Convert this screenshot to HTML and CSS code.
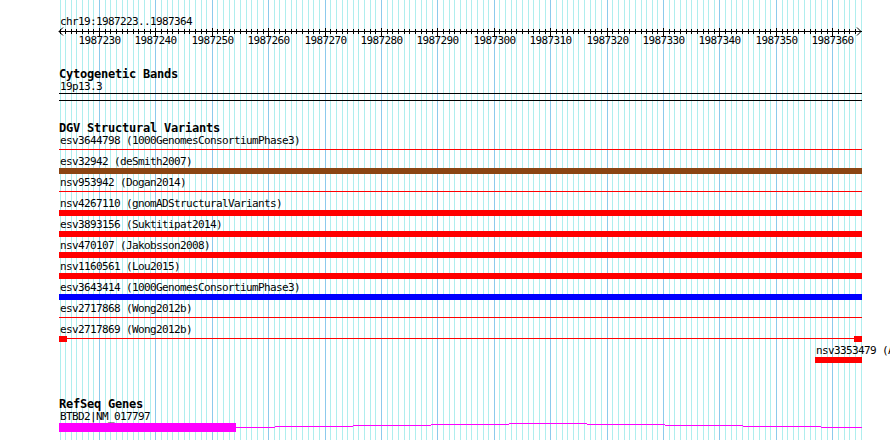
FILE: index.html
```html
<!DOCTYPE html>
<html lang="en">
<head>
    <meta charset="UTF-8">
    <title>chr19:1987223..1987364</title>
    <link rel="stylesheet" href="styles.css">
</head>
<body>

    <div class="view">
        <!-- grid lines, one per bp -->
        <svg class="grid" id="grid" width="890" height="440"></svg>

        <div class="tracks">
            <section class="ruler">
                <div class="seg-name">chr19:1987223..1987364</div>
                <svg class="axis" id="axis" width="803" height="20"></svg>
            </section>

            <section class="track cyto">
                <h2 class="track-title">Cytogenetic Bands</h2>
                <div class="feat-label">19p13.3</div>
                <div class="band"></div>
            </section>

            <section class="track dgv">
                <h2 class="track-title">DGV Structural Variants</h2>
                <div class="feature">
                    <div class="feat-label">esv3644798 (1000GenomesConsortiumPhase3)</div>
                    <div class="glyph line red"></div>
                </div>
                <div class="feature">
                    <div class="feat-label">esv32942 (deSmith2007)</div>
                    <div class="glyph bar brown"></div>
                </div>
                <div class="feature">
                    <div class="feat-label">nsv953942 (Dogan2014)</div>
                    <div class="glyph line red"></div>
                </div>
                <div class="feature">
                    <div class="feat-label">nsv4267110 (gnomADStructuralVariants)</div>
                    <div class="glyph bar red"></div>
                </div>
                <div class="feature">
                    <div class="feat-label">esv3893156 (Suktitipat2014)</div>
                    <div class="glyph bar red"></div>
                </div>
                <div class="feature">
                    <div class="feat-label">nsv470107 (Jakobsson2008)</div>
                    <div class="glyph bar red"></div>
                </div>
                <div class="feature">
                    <div class="feat-label">nsv1160561 (Lou2015)</div>
                    <div class="glyph bar red"></div>
                </div>
                <div class="feature">
                    <div class="feat-label">esv3643414 (1000GenomesConsortiumPhase3)</div>
                    <div class="glyph bar blue"></div>
                </div>
                <div class="feature">
                    <div class="feat-label">esv2717868 (Wong2012b)</div>
                    <div class="glyph line red"></div>
                </div>
                <div class="feature">
                    <div class="feat-label">esv2717869 (Wong2012b)</div>
                    <div class="glyph line red ends"></div>
                </div>
                <div class="feature" style="margin-left: 756px">
                    <div class="feat-label">nsv3353479 (AlsmadiEtAl2014)</div>
                    <div class="glyph bar red" style="width: 47px"></div>
                </div>
            </section>

            <section class="track refseq">
                <h2 class="track-title">RefSeq Genes</h2>
                <div class="feat-label">BTBD2|NM_017797</div>
                <svg class="gene" width="803" height="9">
                    <rect x="0" y="0" width="177" height="9" fill="#ff00ff"/>
                    <!-- intron hat, runs off the right edge -->
                    <path d="M177 4.5H216M216 3.5H294M294 2.5H372M372 1.5H450M450 0.5H528M528 1.5H606M606 2.5H684M684 3.5H762M762 4.5H803"
                          stroke="#ff00ff" stroke-width="1" fill="none" shape-rendering="crispEdges"/>
                </svg>
            </section>
        </div>
    </div>

    <script src="script.js"></script>
</body>
</html>
```

FILE: styles.css
```css
body {
    margin: 0;
    background-color: #fff;
    overflow: hidden;
}
.view {
    position: relative;
    width: 890px;
    height: 440px;
    overflow: hidden;
    font-family: 'DejaVu Sans Mono', 'Liberation Mono', monospace;
    color: #000;
}
.grid {
    position: absolute; /* sits behind every track */
    top: 0;
    left: 0;
}
.tracks {
    position: relative;
    padding: 15px 0 0 59px;
    width: 803px;
}
.seg-name,
.feat-label {
    font-size: 11px;
    letter-spacing: -0.62px;
    line-height: 13px;
    height: 13px;
    padding-left: 1px;
    white-space: nowrap;
}
.axis {
    display: block;
    overflow: visible;
}
.axis text {
    font-family: 'DejaVu Sans Mono', 'Liberation Mono', monospace;
    font-size: 11px;
    letter-spacing: -0.62px;
    fill: #000;
}
.track {
    margin-top: 20px;
}
.dgv {
    margin-top: 21px;
}
.refseq {
    margin-top: 35px;
}
.track-title {
    margin: 0;
    font-size: 12px;
    font-weight: bold;
    letter-spacing: -0.22px;
    line-height: 12px;
    height: 12px;
    white-space: nowrap;
}
.band {
    height: 6px;
    border-top: 1px solid #000;
    border-bottom: 1px solid #000;
}
.feature {
    margin-bottom: 2px;
}
.glyph {
    position: relative;
    height: 6px;
    width: 803px;
}
.bar.red { background-color: #ff0000; }
.bar.brown { background-color: #8b4513; }
.bar.blue { background-color: #0000ff; }
.line::before {
    content: "";
    position: absolute;
    left: 0;
    right: 0;
    top: 2px;
    height: 1px;
    background-color: #ff0000;
}
/* small end blocks on the partial variant */
.ends::after {
    content: "";
    position: absolute;
    left: 0;
    right: 0;
    top: 0;
    height: 6px;
    background:
        linear-gradient(#ff0000, #ff0000) left top / 8px 6px no-repeat,
        linear-gradient(#ff0000, #ff0000) right top / 8px 6px no-repeat;
}
.gene {
    display: block;
}
```

FILE: script.js
```js
const start = 1987223;
const end = 1987364;
const x0 = 59.5;
const scale = 5.641; // px per bp
const NS = 'http://www.w3.org/2000/svg';

function px(bp) {
    return Math.round(x0 + (bp - start) * scale);
}

function el(name, attrs) {
    const node = document.createElementNS(NS, name);
    for (const k in attrs) node.setAttribute(k, attrs[k]);
    return node;
}

// vertical grid
const grid = document.getElementById('grid');
for (let bp = start; bp <= end + 1; bp++) {
    grid.appendChild(el('rect', {
        x: px(bp), y: 0, width: 1, height: 440,
        fill: bp % 10 === 0 ? '#8ccaec' : '#afeeee'
    }));
}

// ruler
const axis = document.getElementById('axis');
const left = 59;
const ink = { stroke: '#000', 'stroke-width': 1, 'shape-rendering': 'crispEdges', fill: 'none' };

axis.appendChild(el('path', Object.assign({ d: 'M0 3.5H803' }, ink)));
axis.appendChild(el('path', Object.assign({ d: 'M4 -0.5L0 3.5L4 7.5M798 -0.5L802 3.5L798 7.5' }, ink, { 'shape-rendering': 'auto' })));

for (let bp = start; bp <= end; bp++) {
    const x = px(bp) - left + 0.5;
    const major = bp % 10 === 0;
    axis.appendChild(el('path', Object.assign({ d: `M${x} ${major ? 0 : 1}V${major ? 8 : 6}` }, ink)));
    if (major) {
        const t = el('text', { x: x, y: 16, 'text-anchor': 'middle' });
        t.textContent = bp;
        axis.appendChild(t);
    }
}
```
